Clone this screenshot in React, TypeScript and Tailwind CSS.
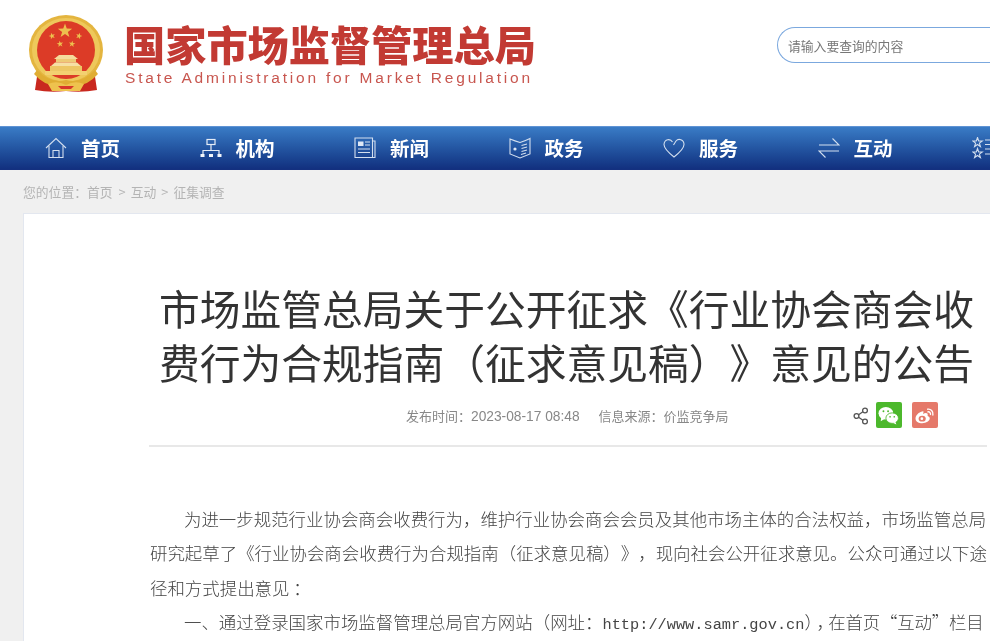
import React from "react";

const CJK = "font-['Noto_Sans_CJK_SC','Liberation_Sans',sans-serif] [text-spacing-trim:space-all]";

function starPts(cx: number, cy: number, r: number, rot = 0) {
  const p: string[] = [];
  for (let i = 0; i < 10; i++) {
    const rr = i % 2 === 0 ? r : r * 0.4;
    const a = -Math.PI / 2 + (i * Math.PI) / 5 + rot;
    p.push(`${(cx + rr * Math.cos(a)).toFixed(2)},${(cy + rr * Math.sin(a)).toFixed(2)}`);
  }
  return p.join(" ");
}

function Emblem() {
  return (
    <svg viewBox="28 15 76 78" className="w-[76px] h-[78px] shrink-0">
      {/* ribbons */}
      <path d="M38 70 L35 90 Q50 93 66 91 Q82 93 97 90 L94 70 Q66 88 38 70 Z" fill="#c9281f" />
      {/* ring */}
      <ellipse cx="66" cy="50" rx="37" ry="35" fill="#e4b53f" />
      <ellipse cx="66" cy="50" rx="34" ry="32" fill="#eec85b" />
      <ellipse cx="66" cy="50" rx="29" ry="29" fill="#dc3b27" />
      <polygon points={starPts(65, 31, 7.5)} fill="#edc04e" />
      <polygon points={starPts(52, 36, 3.4, -0.3)} fill="#edc04e" />
      <polygon points={starPts(79, 36, 3.4, 0.3)} fill="#edc04e" />
      <polygon points={starPts(60, 44, 3.4, -0.15)} fill="#edc04e" />
      <polygon points={starPts(72, 44, 3.4, 0.15)} fill="#edc04e" />
      {/* gate */}
      <path d="M59 55 H73 L78 59 H54 Z" fill="#f5dc9c" />
      <rect x="56" y="59" width="20" height="3.5" fill="#eeca76" />
      <path d="M55 62.5 H77 L81 66 H51 Z" fill="#f6e0a4" />
      <rect x="50" y="66" width="32" height="5" fill="#edc765" />
      <rect x="45" y="71" width="42" height="4" fill="#f3d071" />
      {/* garland */}
      <path d="M37 70 Q50 84 66 80 Q82 84 95 70 L98 74 Q84 90 66 84 Q48 90 34 74 Z" fill="#e0ad33" />
      <path d="M48 84 Q57 80 66 85 Q75 80 84 84 L80 91 H52 Z" fill="#eec24e" />
      <path d="M58 86 H74 L71 89 H61 Z" fill="#d8372a" />
    </svg>
  );
}

const S = { fill: "none", stroke: "#d3dfef", strokeWidth: 1.1 } as const;

function HomeIcon() {
  return (
    <svg viewBox="0 0 22 22" className="w-[22px] h-[22px]" {...S}>
      <path d="M1 11 L11 1.5 L21 11" />
      <path d="M4 9 V20.5 H18 V9" />
      <path d="M8 20.5 V13.5 H14 V20.5" />
    </svg>
  );
}
function OrgIcon() {
  return (
    <svg viewBox="0 0 22 22" className="w-[22px] h-[22px]">
      <rect x="7" y="2.5" width="8" height="5" fill="none" stroke="#e6edf7" strokeWidth="1.2" />
      <path d="M11 7.5 V14 M3 17 V13.5 H19 V17" fill="none" stroke="#e6edf7" strokeWidth="1.2" />
      <rect x="0.5" y="17" width="4" height="3" fill="#f2f6fb" />
      <rect x="9" y="17" width="4" height="3" fill="#f2f6fb" />
      <rect x="17.5" y="17" width="4" height="3" fill="#f2f6fb" />
    </svg>
  );
}
function NewsIcon() {
  return (
    <svg viewBox="0 0 22 22" className="w-[22px] h-[22px]" {...S}>
      <path d="M1 1 H18.5 V20.5 H1 Z" />
      <path d="M18.5 4 H21 V20.5 H18.5" />
      <rect x="4" y="4.5" width="5.5" height="4.5" fill="#dfe8f5" stroke="none" />
      <path d="M11 5 H16 M11 8 H16 M4 12 H16 M4 15.5 H16" />
    </svg>
  );
}
function GovIcon() {
  return (
    <svg viewBox="0 0 22 22" className="w-[22px] h-[22px]" {...S}>
      <path d="M1 2 Q6 4 11 5.5 Q16 4 21 1.5 V17 L11 21 L1 17 Z" />
      <circle cx="6" cy="12" r="1.6" fill="#dfe8f5" stroke="none" />
      <path d="M12.5 8.5 L18 7 M12.5 11.5 L18 10 M12.5 14.5 L18 13 M12 17.5 L17 16" />
    </svg>
  );
}
function HeartIcon() {
  return (
    <svg viewBox="0 0 22 22" className="w-[22px] h-[22px]" {...S}>
      <path d="M9.5 5 C7.5 1.5 1.5 1.5 1 7.5 C1 11 6 16 11 20 C16 16 21 11 21 7.5 C21 2.5 15.5 1 13 4 L10.5 8" />
    </svg>
  );
}
function SwapIcon() {
  return (
    <svg viewBox="0 0 22 22" className="w-[22px] h-[22px]" {...S}>
      <path d="M1 8 H21 L14.5 1.5" />
      <path d="M21 14 H1 L7.5 20.5" />
    </svg>
  );
}
function SpecialIcon() {
  return (
    <svg viewBox="0 0 22 22" className="w-[22px] h-[22px]" {...S}>
      <polygon points={starPts(5.5, 5.5, 5)} />
      <polygon points={starPts(5.5, 16.5, 5)} />
      <path d="M13 3 H22 M13 7.5 H22 M13 12 H22 M13 17 H22" />
    </svg>
  );
}

const NAV: [React.ReactNode, string][] = [
  [<HomeIcon />, "首页"],
  [<OrgIcon />, "机构"],
  [<NewsIcon />, "新闻"],
  [<GovIcon />, "政务"],
  [<HeartIcon />, "服务"],
  [<SwapIcon />, "互动"],
];

function ShareIcon() {
  return (
    <svg viewBox="0 0 16 18" className="w-[16px] h-[18px]" fill="none" stroke="#555" strokeWidth="1.3">
      <circle cx="12" cy="3.5" r="2.4" />
      <circle cx="3.5" cy="9" r="2.4" />
      <circle cx="12" cy="14.5" r="2.4" />
      <path d="M5.6 7.7 L9.9 4.8 M5.6 10.3 L9.9 13.2" />
    </svg>
  );
}
function WechatBadge() {
  return (
    <div className="w-[26px] h-[26px] rounded-[2px] bg-[#4cb82c] flex items-center justify-center">
      <svg viewBox="0 0 20 18" className="w-[21px] h-[19px]">
        <ellipse cx="7.5" cy="6.8" rx="7" ry="6" fill="#fff" />
        <path d="M3 11 L2.6 14.5 L6.5 12 Z" fill="#fff" />
        <ellipse cx="13.5" cy="11.5" rx="6" ry="5" fill="#fff" stroke="#4cb82c" strokeWidth="0.8" />
        <path d="M16.5 15 L17.5 17.5 L14 16 Z" fill="#fff" />
        <circle cx="5.2" cy="5" r="0.9" fill="#4cb82c" />
        <circle cx="9.6" cy="5" r="0.9" fill="#4cb82c" />
        <circle cx="11.5" cy="10.2" r="0.8" fill="#4cb82c" />
        <circle cx="15.5" cy="10.2" r="0.8" fill="#4cb82c" />
      </svg>
    </div>
  );
}
function WeiboBadge() {
  return (
    <div className="w-[26px] h-[26px] rounded-[2px] bg-[#e5796a] flex items-center justify-center">
      <svg viewBox="0 0 20 18" className="w-[21px] h-[19px]" fill="none">
        <path d="M8.5 5 C4 6 1 9.5 1.5 12.5 C2 16 7 17 10.5 16 C14 15 16 12.5 14.5 10.5 C13.8 9.6 12.6 9.6 13 8.5 C13.4 6.8 11.5 6 8.5 7.5 C9.2 6 9.5 5 8.5 5 Z" fill="#fff" />
        <ellipse cx="7.8" cy="12" rx="3.4" ry="2.8" fill="#e5796a" />
        <circle cx="7.5" cy="12" r="1.3" fill="#fff" />
        <path d="M13 3 C16 2.5 18.5 5 18 8.5 M13.2 5.5 C14.8 5.2 16 6.5 15.7 8" stroke="#fff" strokeWidth="1.3" strokeLinecap="round" />
      </svg>
    </div>
  );
}

export default function App() {
  return (
    <div className={`${CJK} w-[1000px] h-[641px] overflow-hidden bg-white blur-[0.4px]`}>
      <div className="w-[990px] h-[641px] flex flex-col">
        <header className="h-[126px] shrink-0 flex items-start pt-[15px] pl-[28px]">
          <Emblem />
          <div className="ml-[20px] flex flex-col">
            <div className="text-[41.2px] leading-[44px] font-black text-[#c23a33] whitespace-nowrap mt-[6px]">
              国家市场监督管理总局
            </div>
            <div className="font-['Liberation_Sans',sans-serif] text-[15.5px] leading-[20px] tracking-[2.8px] text-[#c8564f] whitespace-nowrap ml-[1px] mt-[3px]">
              State Administration for Market Regulation
            </div>
          </div>
          <div className="ml-auto mt-[12px] w-[213px] h-[36px] rounded-l-full border-y border-l border-[#7ba8de] flex items-center pl-[10px] pt-[2px] text-[12.8px] text-[#777]">
            请输入要查询的内容
          </div>
        </header>

        <nav className="h-[44px] shrink-0 flex items-center pl-[45px] overflow-hidden border-t border-[#5f93d4] bg-gradient-to-b from-[#3a7cc6] to-[#12307f] border-b-[#14307f] border-b">
          {NAV.map(([icon, label]) => (
            <div key={label} className="w-[154.5px] shrink-0 flex items-center">
              <span className="w-[36px] shrink-0">{icon}</span>
              <span className="text-[19.5px] leading-[24px] font-bold text-white whitespace-nowrap">{label}</span>
            </div>
          ))}
          <div className="shrink-0">
            <SpecialIcon />
          </div>
        </nav>

        <main className="flex-1 bg-[#f0f0f0] pl-[23px] flex flex-col min-h-0">
          <div className="h-[43px] shrink-0 flex items-center gap-[5px] text-[12.8px] text-[#b4b4b4] whitespace-nowrap">
            <span className="mr-[1px]">您的位置：首页</span>
            <span>&gt;</span>
            <span>互动</span>
            <span>&gt;</span>
            <span>征集调查</span>
          </div>
          <article className="flex-1 min-h-0 bg-white border-t border-l border-[#e3e7ef] pl-[125px] pr-[3px] overflow-hidden">
            <h1 className="pl-[10px] pt-[67px] text-[40.75px] leading-[54px] font-normal text-[#333] whitespace-nowrap">
              <div>市场监管总局关于公开征求《行业协会商会收</div>
              <div>费行为合规指南（征求意见稿）》意见的公告</div>
            </h1>
            <div className="h-[55px] mt-[3px] border-b-2 border-[#e8e8e8] flex items-start pt-[10px] pl-[257px] text-[13px] leading-[20px] text-[#888] whitespace-nowrap font-['Liberation_Sans','Noto_Sans_CJK_SC',sans-serif]">
              <span className="mt-[5px]">发布时间：<span className="text-[13.75px]">2023-08-17 08:48</span></span>
              <span className="mt-[5px] ml-[19px]">信息来源：价监竞争局</span>
              <span className="ml-[124px] mt-[5px]"><ShareIcon /></span>
              <span className="ml-[7px]"><WechatBadge /></span>
              <span className="ml-[10px]"><WeiboBadge /></span>
            </div>
            <div className="mt-[55px] ml-[1px] w-[838px] text-[17.45px] leading-[34.4px] text-[#444] font-light">
              <p className="indent-[34px]">
                为进一步规范行业协会商会收费行为，维护行业协会商会会员及其他市场主体的合法权益，市场监管总局研究起草了《行业协会商会收费行为合规指南（征求意见稿）》，现向社会公开征求意见。公众可通过以下途径和方式提出意见 ：
              </p>
              <p className="indent-[34px] whitespace-nowrap">
                一、通过登录国家市场监督管理总局官方网站（网址：<span className="font-['Liberation_Mono',monospace] text-[15.3px]">http://www.samr.gov.cn</span><span className="tracking-[-5.5px]">），</span><span className="tracking-[-0.2px]">在首页“互动”栏目</span>
              </p>
            </div>
          </article>
        </main>
      </div>
    </div>
  );
}
